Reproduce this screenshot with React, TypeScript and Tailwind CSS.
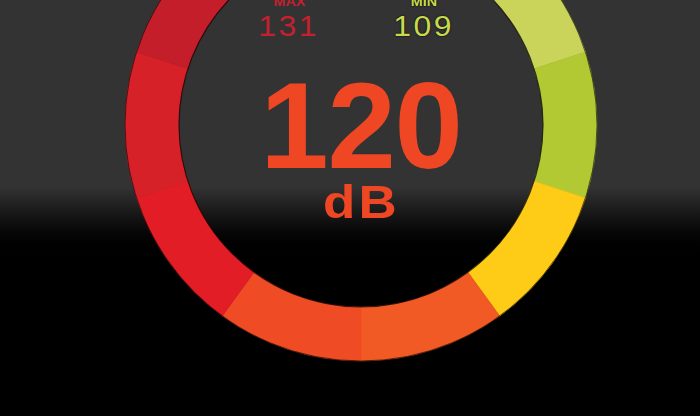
const CX = 361;
const CY = 125;
const R_OUT = 236;
const R_IN = 182;

// ten 36° segments, clockwise from 12 o'clock
const segments = [
  '#e0dc6c',
  '#cbd45a',
  '#b2c934',
  '#fecb17',
  '#f15a24',
  '#ef4b24',
  '#e31d26',
  '#d72128',
  '#c41e2a',
  '#b81f2e',
];

function pt(deg: number, r: number) {
  const t = (deg * Math.PI) / 180;
  return `${(CX + r * Math.sin(t)).toFixed(2)} ${(CY - r * Math.cos(t)).toFixed(2)}`;
}

function arcPath(a0: number, a1: number) {
  return [
    `M ${pt(a0, R_OUT)}`,
    `A ${R_OUT} ${R_OUT} 0 0 1 ${pt(a1, R_OUT)}`,
    `L ${pt(a1, R_IN)}`,
    `A ${R_IN} ${R_IN} 0 0 0 ${pt(a0, R_IN)}`,
    'Z',
  ].join(' ');
}

function Ring() {
  return (
    <svg className="absolute inset-0" width={700} height={416} viewBox="0 0 700 416">
      {segments.map((c, i) => (
        <path key={i} d={arcPath(i * 36, i * 36 + 36)} fill={c} stroke={c} strokeWidth={0.6} />
      ))}
      <circle cx={CX} cy={CY} r={R_OUT} fill="none" stroke="rgba(0,0,0,0.55)" strokeWidth={1} />
      <circle cx={CX} cy={CY} r={R_IN} fill="none" stroke="rgba(0,0,0,0.7)" strokeWidth={1.2} />
    </svg>
  );
}

export default function App() {
  return (
    <div className="relative w-[700px] h-[416px] overflow-hidden bg-linear-to-b from-[#333333] from-[45%] to-black to-[63%] font-['Liberation_Sans',Arial,sans-serif]">
      <Ring />
      <div className="relative flex flex-col items-center pl-[22px]">
        <div className="flex gap-[55px] mr-[9px] -mt-[5px]">
          <div className="w-[80px] flex flex-col items-center text-[#c4202e]">
            <span className="text-[13px] font-bold leading-none scale-x-110">MAX</span>
            <span className="mt-[4px] text-[29px] leading-none tracking-[0.08em] scale-x-110">131</span>
          </div>
          <div className="w-[80px] flex flex-col items-center text-[#c8da4c] [text-shadow:0_0_2px_#000]">
            <span className="text-[13px] font-bold leading-none scale-x-110">MIN</span>
            <span className="mt-[4px] text-[29px] leading-none tracking-[0.08em] scale-x-110">109</span>
          </div>
        </div>
        <span className="mt-[23px] text-[123px] font-bold leading-none text-[#ef4624] tracking-[-0.01em]">120</span>
        <span className="-mt-[8px] text-[46px] font-bold leading-none text-[#ef4624] tracking-[0.06em] scale-x-[1.15]">dB</span>
      </div>
    </div>
  );
}
